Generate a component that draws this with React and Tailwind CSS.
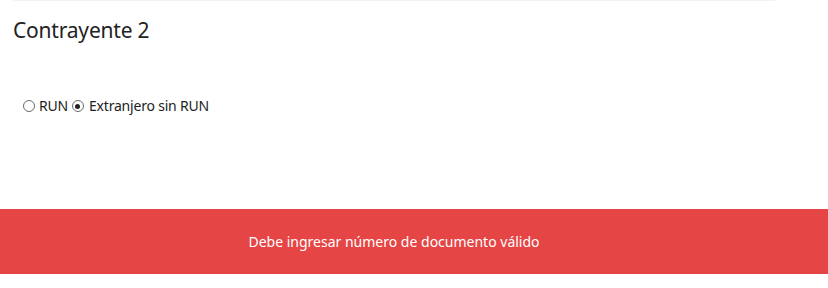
function Radio({ checked }) {
  return (
    <span className="w-[12px] h-[12px] rounded-full border border-[#6b6b6b] bg-white flex items-center justify-center shrink-0">
      {checked && <span className="w-[5px] h-[5px] rounded-full bg-[#222]" />}
    </span>
  );
}

export default function App() {
  return (
    <div className="w-[828px] h-[288px] bg-white overflow-hidden" style={{ fontFamily: '"Noto Sans", "Open Sans", sans-serif' }}>
      <div className="ml-[13px] w-[762px] h-px bg-[#f2f2f2]" />
      <div className="px-[13px] pt-[15px]">
        <h2 className="text-[21px] leading-[28px] text-[#222] font-normal tracking-[-0.2px]">Contrayente 2</h2>
      </div>
      <div className="flex items-center pl-[23px] mt-[52px] text-[14px] leading-[20px] text-[#222] tracking-[-0.2px]">
        <label className="flex items-center gap-[4px]">
          <Radio />
          <span>RUN</span>
        </label>
        <label className="flex items-center gap-[5px] ml-[4px]">
          <Radio checked />
          <span>Extranjero sin RUN</span>
        </label>
      </div>
      <div className="mt-[93px] h-[65px] bg-[#e64545] flex items-center justify-center pr-[40px]">
        <span className="text-white text-[14px]">Debe ingresar número de documento válido</span>
      </div>
    </div>
  );
}
